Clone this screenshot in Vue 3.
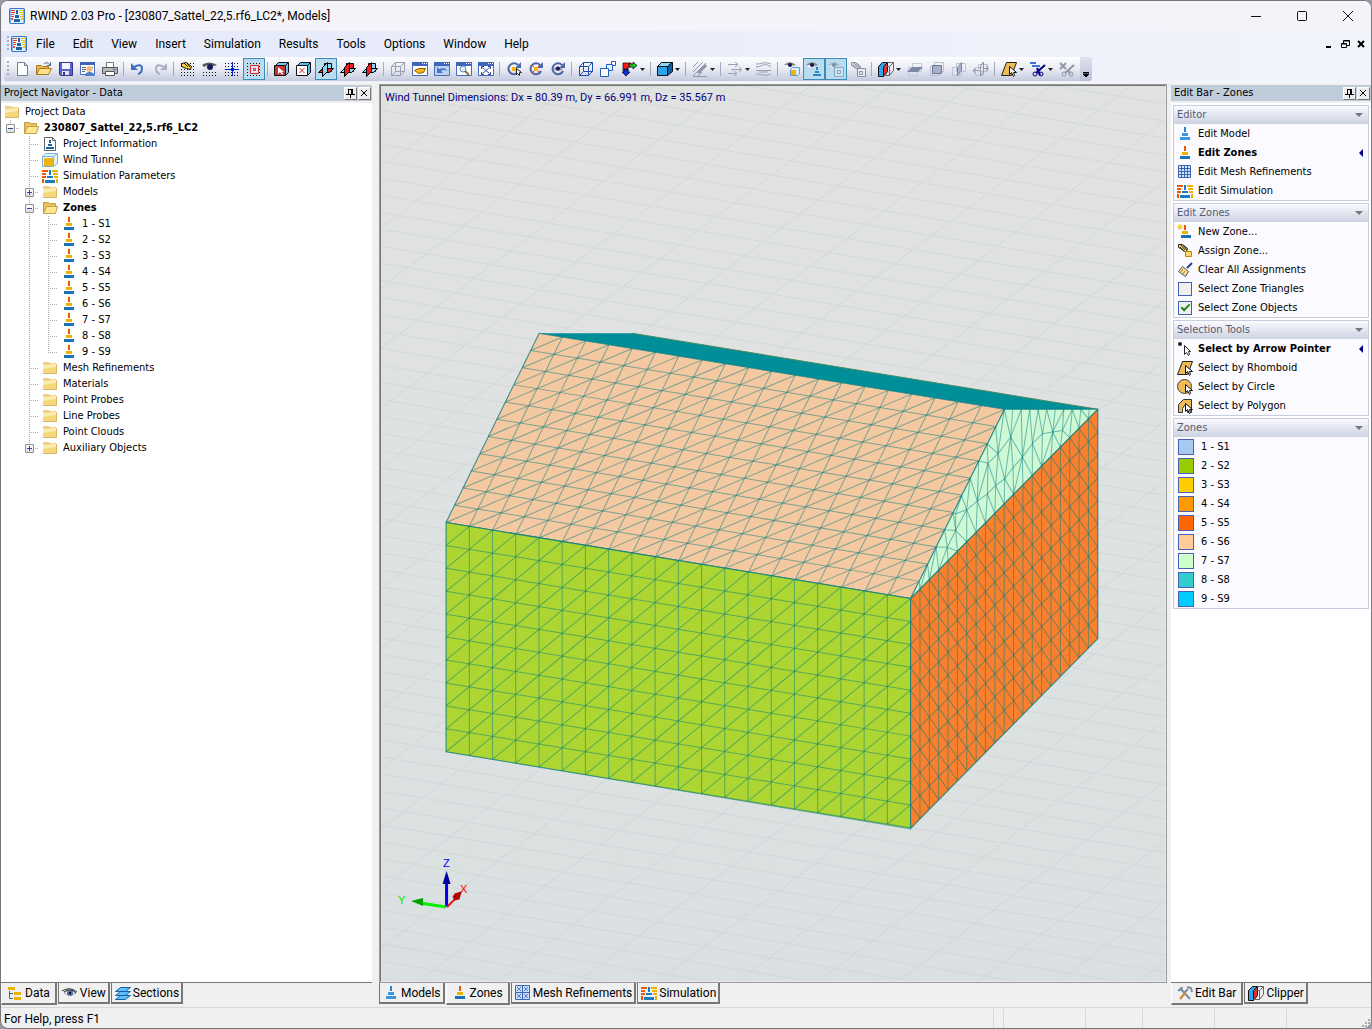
<script setup>
import { ref } from 'vue'

const navy = '#000080'
const tower = (a, b, c) =>
  `<path fill="${a}" d="M7 1h2v5H7z"/><path fill="${b}" d="M5 7h6v3H5z"/><path fill="${c}" d="M3 11h10v3H3z"/>`
const dots =
  '<path stroke="#111" stroke-width="1" stroke-dasharray="1 2" d="M1 2.5h14M1 5.5h14M1 8.5h14M1 11.5h14M1 14.5h14"/>'
const frame =
  '<path fill="#fff" stroke="#4a6cb8" d="M.5 1.5h15v13H.5z"/><path fill="#3f66ba" d="M0 1h16v4H0z"/><path fill="#fff" d="M10 2h1v1h-1zM12 2h1v1h-1zM14 2h1v1h-1z"/>'
const wire = (c) =>
  `<path fill="none" stroke="${c}" d="M1.5 5.5h9v9h-9zM5.5 1.5h9v9h-9zM1.5 5.5l4-4M10.5 5.5l4-4M10.5 14.5l4-4M1.5 14.5l4-4"/>`
const planes = (a, b, c) =>
  `<path fill="${a}" stroke="#000" d="M6.500 2.500h7v8h-7z"/><path fill="${b}" stroke="#000" d="M.5 11.500l4-4h11l-4 4z"/><path fill="${c}" stroke="#000" d="M4.500 6.500l5-5v9l-5 5z"/>`
const rot =
  '<path fill="none" stroke="#4a67a8" stroke-width="2" d="M12 4A5.500 5.500 0 1 0 13 10"/><path fill="#4a67a8" d="M15 1v6H9z"/>'
const eye =
  '<path fill="#888" d="M0 4q4-4 9-2l3 2-4 1z"/><path fill="#fff" d="M1 5q4-2 8 0-4 3-8 0z"/><circle cx="6" cy="4" r="2" fill="#11154c"/>'
const arrow = '<path fill="#fff" stroke="#111" d="M8.500 5.500v8l2-2 2 4 1-1-1-3h3z"/>'
const hand = (c, f) => `<path fill="${f}" stroke="${c}" d="M1.500 1.500l4 0 5 4-1 3-2 0-4-3-2-1z"/><path stroke="${c}" d="M4 2l4 5M6 2l4 5M3 4l4 4"/>`
const gridBars =
  '<path fill="#e8590c" d="M0 2h6v2H0zM0 5h4v2H0zM0 8h4v2H0zM0 11h2v4H0z"/><path fill="#edb200" d="M10 2h6v2h-6zM11 5h5v2h-5zM12 8h4v2h-4zM14 11h2v4h-2z"/><path fill="#1a7cc4" d="M7 2h2v5H7zM5 8h6v2H5zM3 12h10v3H3z"/>'

const icons = {
  app: '<rect width="16" height="16" rx="2" fill="#2f77cc"/><rect x="1.500" y="1" width="13" height="14" fill="#e7f3ff"/><path fill="#ef3e20" d="M2 2h4v1H2zM2 4h4v1H2zM2 6h3v1H2zM2 8h3v1H2zM2 10h2v2H2z"/><path fill="#f4c000" d="M10 2h4v1h-4zM10 4h4v1h-4zM11 6h3v1h-3zM11 8h3v1h-3zM12 10h2v2h-2z"/><path fill="#1c64a8" d="M7 2h2v4H7zM6 7h4v3H6zM5 11h6v3H5z"/>',
  new: '<path fill="#fff" stroke="#6d7f99" d="M3.500 1.500h7l3 3v10h-10z"/><path fill="#cdd9ea" stroke="#6d7f99" d="M10.500 1.500v3h3"/>',
  open: '<path fill="#e8b84c" stroke="#a87a20" d="M.5 4.500h5l1 1h6v8h-12z"/><path fill="#ffe08a" stroke="#a87a20" d="M.5 13.500l3-6h12l-3 6z"/><path fill="none" stroke="#4a6a8c" d="M8 3q3-3 6 1M14.500 1v3.500H11"/>',
  save: '<path fill="#5b62cc" stroke="#33388f" d="M1.500 1.500h13v13h-12l-1-1z"/><path fill="#f3f5ff" d="M4 2h8v6H4z"/><path fill="#dfe2f0" d="M4 10h7v4H4z"/><path fill="#33388f" d="M5 11h2v3H5z"/>',
  props: '<path fill="#fff" stroke="#4a6cb8" d="M.5 1.500h14v12H.5z"/><path fill="#3f66ba" d="M0 1h15v3H0z"/><path stroke="#55657f" d="M2 6.500h4M2 8.500h4M2 10.500h3M9 6.500h4"/><circle cx="9.500" cy="8" r="3" fill="#f5b77a"/><path fill="#4c80cc" d="M5 15q0-4 4.500-4t5.500 4z"/>',
  print: '<path fill="#fff" stroke="#777" d="M4.500 1.500h7v5h-7z"/><path fill="#b4b8bf" stroke="#555" d="M.5 6.500h15v6H.5z"/><path fill="#fff" stroke="#555" d="M3.500 10.500h9v4h-9z"/><path fill="#4a6fb8" d="M11 8h3v1h-3z"/>',
  undo: '<path fill="none" stroke="#3f6ec2" stroke-width="2" d="M4 6q7-4 8 1 0 5-4 6"/><path fill="#3f6ec2" d="M1 2v7h7z"/>',
  redo: '<path fill="none" stroke="#a9b0c2" stroke-width="2" d="M12 6q-7-4-8 1 0 5 4 6"/><path fill="#a9b0c2" d="M15 2v7H8z"/>',
  dotHand: dots + '<path fill="#ffd23c" stroke="#111" d="M1.500 2.500l5-1 5 4-1 3-4-1-5-2z"/><path stroke="#111" d="M4 2l4 4M7 2l3 4"/>',
  dotEye: dots + '<path fill="#e6e6e6" d="M1 2h13v7H1z"/><path fill="#555" d="M0 4q7-5 15 0l-3 1Q7 2 2 6z"/><circle cx="8" cy="6" r="3" fill="#16195c"/>',
  dotCross: dots + '<path stroke="#0020d0" d="M8.500 1v14M1 8.500h14"/><path fill="#0020d0" d="M7 7h3v3H7z"/>',
  dotBox: dots + '<path fill="#d7ecf8" stroke="#ee2020" d="M4.500 4.500h8v8h-8zM7.500 7.500h2v2h-2z"/>',
  boxRed: '<path fill="#7cc4f0" stroke="#111" d="M1.500 4.500l3-3h10v10l-3 3"/><path fill="#c43838" stroke="#111" d="M.5 4.500h11v10H.5z"/><path fill="#fff" d="M4 6v7l2-2 2 3 1-1-1-2h2z"/><path stroke="#111" d="M11.500 4.500l3-3"/>',
  boxX: '<path fill="#5cbcf0" stroke="#111" d="M1.500 4.500l3-3h10v10l-3 3"/><path fill="#fff" stroke="#111" d="M.5 4.500h11v10H.5z"/><path stroke="#e02020" d="M3.500 7l5 5M8.500 7l-5 5"/><path stroke="#111" d="M11.500 4.500l3-3"/>',
  pl1: planes('#8ed2f2', '#ee2020', '#8ed2f2'),
  pl2: planes('#ee2020', '#8ed2f2', '#ee2020'),
  pl3: planes('#8ed2f2', '#8ed2f2', '#ee2020'),
  wireGray: wire('#9aa0b2'),
  winHand: frame + '<path fill="#f6b91c" stroke="#8b5a00" d="M2.500 9.500l4-2 7 0-2 4-5 1z"/>',
  winBack: frame + '<path fill="#bcd3f2" d="M1 5h14v9H1z"/><path fill="#4776c8" d="M3 6v6h6L7 10q3-2 6 0-1-4-8-2z"/>',
  winZoom: frame + '<circle cx="7" cy="8" r="3" fill="#d5ecff" stroke="#6d86a8"/><path stroke="#8a6b40" stroke-width="2" d="M9 10l4 4"/>',
  winFit: frame + '<path stroke="#2a4a9a" fill="none" d="M4.500 6.500l7 6M11.500 6.500l-7 6M3.500 8V5.500H6M10 5.500h2.500V8M3.500 11v2.500H6M10 13.500h2.500V11"/>',
  rotP: rot + '<path fill="#f8b400" d="M6 6h4v4H6z"/><path fill="#fff" stroke="#222" d="M10.500 7.500v6l1-1 2 2 0-3 2 0z"/>',
  rotX: rot + '<path fill="#f8b400" d="M6 6h4v4H6z"/><path stroke="#ee3030" d="M4 4l2 2M12 12l-2-2M12 4l-2 2M4 12l2-2"/>',
  rotE: rot + '<path fill="#999" d="M3 8q4-5 10 0-5 4-10 0z"/><circle cx="8" cy="7.500" r="2" fill="#16195c"/>',
  wireBlue: wire('#1f4fae'),
  boxes: '<path fill="#fff" stroke="#1f5fc4" d="M11.500 .5h4v4h-4z"/><path fill="#e4f1ff" stroke="#1f5fc4" d="M6.500 3.500h6v6h-6z"/><path fill="#fff" stroke="#1f5fc4" d="M.5 7.500h8v8h-8z"/>',
  axes: '<path fill="#ff1818" stroke="#000" stroke-width=".7" d="M1 2h8v4H6v4H1z"/><path fill="#10c820" stroke="#000" stroke-width=".7" d="M7 3h4V1l4 3.500-4 3.500V6H7z"/><path fill="#1030e0" stroke="#000" stroke-width=".7" d="M2 8h4v3h2l-4 4-4-4h2z"/>',
  cube: '<path fill="#2fa4ea" stroke="#111" d="M.5 5.500h10v9H.5z"/><path fill="#8cd8fa" stroke="#111" d="M.5 5.500l4-4h11l-5 4z"/><path fill="#10609c" stroke="#111" d="M10.500 5.500l5-4v9l-5 4z"/>',
  hatch: '<path stroke="#8f96a8" d="M1 6l5-5M1 11L11 1M1 15L14 2M6 15l4-4"/><path stroke="#8f96a8" stroke-width="3" d="M6 12l8-8"/><path stroke="#8f96a8" d="M1 15.500h14"/>',
  flow: '<path fill="none" stroke="#9aa1b4" d="M1 3.500h9M4 8.500h10M1 12.500h8M8 1l3 2.500L8 6M12 6l3 2.500L12 11M7 10l3 2.500L7 15"/>',
  waves: '<path fill="none" stroke="#9aa1b4" d="M0 3q4 0 7-1t8 1M0 6q4 0 7-2t8 2M0 9.500h15M0 13q4 0 7 1t8-1M3 11h9"/>',
  eyeCube: eye + '<path fill="#d8efff" stroke="#5c9ed0" d="M6.500 8.500l2-2h7v6l-2 2h-7z"/><path fill="#f8b000" d="M7 9h5v5H7z"/>',
  eyeTower: eye + '<path fill="#2b82c8" d="M10 6h2v3h-2zM9 10h4v2H9zM7 13h8v2H7z"/>',
  eyeBox: '<g opacity=".4">' + eye + '<path fill="#dceaf2" stroke="#557" d="M6.500 6.500h9v9h-9zM9.500 9.500h3v3h-3z"/></g>',
  handBox: hand('#8a90a2', '#d7dae4') + '<path fill="#e9ebf3" stroke="#8a90a2" d="M7.500 7.500h8v8h-8zM9.500 10.500h3v3h-3z"/>',
  clip: '<path fill="#2fa4ea" stroke="#111" d="M.5 5.500l4-4h5l-4 4v10h-5z"/><path fill="#ee2828" stroke="#111" d="M5.500 5.500l4-4v9l-4 5z"/><path fill="none" stroke="#666" d="M9.500 1.500h6v8l-4 5h-6M11.500 5.500v9M5.500 5.500h6l4-4"/>',
  secA: '<path fill="none" stroke="#c3c8d6" d="M1.500 6.500h9v8h-9zM5.500 2.500h9v8h-9z"/><path fill="#7d87a4" d="M0 11l5-5h11l-5 5z"/>',
  secB: '<path fill="none" stroke="#b8bece" d="M1.500 5.500h9v9h-9zM5.500 1.500h9v9h-9z"/><path fill="#a8b1cc" stroke="#6d7694" d="M3.500 4.500h9v8h-9z"/>',
  secC: '<path fill="none" stroke="#bcc1d0" d="M1.500 6.500h9v8h-9zM5.500 2.500h9v8h-9z"/><path fill="#a8b1cc" stroke="#7d87a4" d="M6.500 6.500l4-5v8l-4 5z"/>',
  secD: '<path fill="none" stroke="#bcc1d0" d="M2.500 6.500h8v8h-8zM5.500 3.500h9v7h-9z"/><path fill="none" stroke="#8d95aa" d="M7.500 5l3-4v10l-3 4zM0 9.500h5M11 7.500h5M2 7L0 9.500 2 12M13 5l2 2.500L13 10"/>',
  rhomb: '<path fill="#eebb55" stroke="#222" d="M.5 14.500l5-13h10l-5 13z"/>' + arrow,
  cut: `<path fill="#3a78d8" d="M0 1h6v2H0zM2 4h8v2H2z"/><path stroke="${navy}" stroke-width="2" d="M15 4L6 12M7 7l3 7"/><circle cx="5" cy="13" r="2" fill="none" stroke="${navy}"/><circle cx="11" cy="13" r="2" fill="none" stroke="${navy}"/>`,
  cutX: '<path stroke="#9197a9" stroke-width="2" d="M1 2l6 6M7 2L1 8M15 4L6 12M9 8l2 5"/><circle cx="5" cy="13" r="2" fill="none" stroke="#9197a9"/><circle cx="12" cy="13" r="2" fill="none" stroke="#9197a9"/>',
  folder: '<path fill="#ead08a" d="M1 2h6l1 1h5v2H1z"/><path fill="#f4d67c" d="M1 4h7l2-1h4v11H1z"/><path fill="#fbeab2" d="M1 5h7l2-1h4v3L1 9z"/><path fill="none" stroke="#d9b560" d="M1 13.500h13.500V4"/>',
  folderOpen: '<path fill="#e9c264" stroke="#c39a3c" d="M1.500 13.500v-11h5l1 1h6v3"/><path fill="#ffe694" stroke="#c8a042" d="M1.500 13.500l3-7h11l-2 7z"/>',
  info: '<path fill="#fff" stroke="#666" d="M2.500 1.500h8l3 3v10h-11z"/><path fill="none" stroke="#666" d="M10.500 1.500v3h3"/><path fill="#1d5f96" d="M7 4h2v3H7zM6 8h4v2H6zM4 11h8v2H4z"/>',
  tunnel: '<path fill="#e1f3ff" stroke="#7ab4d6" d="M.5 4.500l3-3h12v10l-4 3H.5z"/><path fill="#efb410" d="M2 6h9v8H2z"/><path fill="none" stroke="#7ab4d6" d="M11.500 4.500v10M.5 4.500h11l4-3"/>',
  bars: gridBars,
  zone: tower('#e8590c', '#edb200', '#1a72b8'),
  model: tower('#2586d0', '#3c98dc', '#3c98dc'),
  mesh: '<path fill="#d5e9fb" stroke="#3c62b4" d="M1.500 1.500h12v12h-12zM4.500 1v13M7.500 1v13M10.500 1v13M1 4.500h13M1 7.500h13M1 10.500h13"/>',
  meshTab: '<path fill="#c7e0f6" stroke="#3c66bc" d="M.5 .5h14v14H.5zM7.500 0v15M0 7.500h15"/><path fill="none" stroke="#3c66bc" stroke-width=".8" d="M2 2l4 4M6 2L2 6M9 2l4 4M13 2L9 6M2 9l4 4M6 9l-4 4M9 9l4 4M13 9l-4 4"/>',
  newZone: '<path fill="#e8590c" d="M7 1h2v5H7z"/><path fill="#edb200" d="M5 7h6v3H5z"/><path fill="#1a72b8" d="M4 11h10v3H4z"/><path stroke="#f7c518" d="M3 0v6M0 3h6M1 1l4 4M5 1L1 5"/>',
  assign: hand('#222', '#ffd76a') + '<path fill="#ffd76a" stroke="#c48a00" d="M8.500 8.500h6v5h-6z"/>',
  clear: '<path stroke="#2a3f82" stroke-width="2" d="M15 1l-5 5"/><path fill="#ffdf86" stroke="#3c4f8c" d="M5.500 4.500l6 5-3 5-7-5z"/><path stroke="#9b7d30" d="M6 7l-2 3M8 9l-2 3"/>',
  pointer: '<circle cx="3" cy="3" r="2" fill="#222"/><path fill="#fff" stroke="#222" d="M7.500 4.500v9l2-2 2 3 1-1-1-3h2z"/>',
  circle: '<circle cx="7.500" cy="7.500" r="7" fill="#eebb55" stroke="#444"/>' + arrow,
  polygon: '<path fill="#eebb55" stroke="#333" d="M1.500 14.500v-8l5-5h8v13h-4v-5l-3-2-2 3v4z"/>' + arrow,
  tree: '<path fill="#edb200" d="M1 2h7v3H1zM7 7h7v3H7zM7 12h7v3H7z"/><path fill="none" stroke="#2b62a8" d="M2.500 6v7.500H6M2.500 8.500H6"/>',
  eye: '<path fill="#fff" stroke="#aaa" d="M2 8q6-5 12 0-6 4-12 0z"/><circle cx="8" cy="8" r="3" fill="#4a6ca8"/><circle cx="8" cy="8" r="1" fill="#000"/><path fill="none" stroke="#333" d="M0 6q8-5 15 1M2 7q6-5 12 1"/>',
  layers: '<path fill="#5cc0f6" stroke="#1560a8" d="M.5 14.500l5-4h10l-5 4zM.5 10.500l5-4h10l-5 4zM.5 6.500l5-4h10l-5 4z"/>',
  tools: '<path stroke="#7a8ca4" stroke-width="2" d="M3 3l10 11M11 4L8 7"/><path stroke="#c88a30" stroke-width="2" d="M8 8l-5 6"/><path fill="none" stroke="#7a8ca4" stroke-width="2" d="M1 5q3 1 4-3M10 2l4 1 1 4"/>',
}

const menus = ['File', 'Edit', 'View', 'Insert', 'Simulation', 'Results', 'Tools', 'Options', 'Window', 'Help']

const toolbar =
  'new open save props print | undo redo | dotHand dotEye dotCross dotBox! | boxRed boxX pl1! pl2 pl3 | wireGray winHand winBack winZoom winFit | rotP rotX rotE | wireBlue boxes axes> | cube> | hatch> | flow> waves | eyeCube eyeTower! eyeBox! handBox | clip> secA secB secC secD | rhomb> cut> cutX'
    .split(' ')
    .map((t) => ({ name: t.replace(/[!>]/g, ''), on: t.endsWith('!'), drop: t.endsWith('>'), sep: t === '|' }))

const tree = [
  { cells: [], icon: 'folder', text: 'Project Data' },
  { cells: ['l'], box: '−', icon: 'folderOpen', text: '230807_Sattel_22,5.rf6_LC2', bold: true },
  { cells: ['', 't'], icon: 'info', text: 'Project Information' },
  { cells: ['', 't'], icon: 'tunnel', text: 'Wind Tunnel' },
  { cells: ['', 't'], icon: 'bars', text: 'Simulation Parameters' },
  { cells: ['', 't'], box: '+', icon: 'folder', text: 'Models' },
  { cells: ['', 't'], box: '−', icon: 'folderOpen', text: 'Zones', bold: true },
  ...Array.from({ length: 9 }, (_, i) => ({
    cells: ['', 't v', i === 8 ? 'l' : 't'],
    icon: 'zone',
    text: `${i + 1} - S${i + 1}`,
  })),
  { cells: ['', 't'], icon: 'folder', text: 'Mesh Refinements' },
  { cells: ['', 't'], icon: 'folder', text: 'Materials' },
  { cells: ['', 't'], icon: 'folder', text: 'Point Probes' },
  { cells: ['', 't'], icon: 'folder', text: 'Line Probes' },
  { cells: ['', 't'], icon: 'folder', text: 'Point Clouds' },
  { cells: ['', 'l'], box: '+', icon: 'folder', text: 'Auxiliary Objects' },
]

const zoneObjects = ref(true)
const zoneTriangles = ref(false)

const zoneColors = ['#a6caf0', '#99cc00', '#ffcc00', '#ff9900', '#ff6600', '#ffcc99', '#ccffcc', '#33cccc', '#00ccff']

const editor = [
  { icon: 'model', text: 'Edit Model' },
  { icon: 'zone', text: 'Edit Zones', on: true },
  { icon: 'mesh', text: 'Edit Mesh Refinements' },
  { icon: 'bars', text: 'Edit Simulation' },
]
const zoneTools = [
  { icon: 'newZone', text: 'New Zone...' },
  { icon: 'assign', text: 'Assign Zone...' },
  { icon: 'clear', text: 'Clear All Assignments' },
]
const selection = [
  { icon: 'pointer', text: 'Select by Arrow Pointer', on: true },
  { icon: 'rhomb', text: 'Select by Rhomboid' },
  { icon: 'circle', text: 'Select by Circle' },
  { icon: 'polygon', text: 'Select by Polygon' },
]

// Wire mesh of a parallelogram face: origin, column vector, row vector
function meshLines(o, a, b, cols, rows, flip) {
  const at = (i, j) => [o[0] + (a[0] * i) / cols + (b[0] * j) / rows, o[1] + (a[1] * i) / cols + (b[1] * j) / rows]
  const out = []
  const push = (p, q) => out.push({ x1: p[0], y1: p[1], x2: q[0], y2: q[1] })
  for (let i = 0; i <= cols; i++) push(at(i, 0), at(i, rows))
  for (let j = 0; j <= rows; j++) push(at(0, j), at(cols, j))
  for (let k = 1; k < cols + rows; k++) {
    const i0 = Math.max(0, k - rows)
    const i1 = Math.min(cols, k)
    if (flip) push(at(i0, rows - (k - i0)), at(i1, rows - (k - i1)))
    else push(at(i0, k - i0), at(i1, k - i1))
  }
  return out
}
const front = meshLines([446, 522], [464, 76], [0, 229], 20, 10, false)
const side = meshLines([910, 598], [187, -189], [0, 229], 20, 10, true)
const roof = meshLines([539, 333], [465, 76], [-93, 189], 20, 11, false)

// Free triangulation of the gable in its own plane (u along the eaves, v upwards)
const H = 4.14
const pts = []
for (let i = 0; i <= 20; i++) pts.push([i, 0])
for (let i = 1; i <= 11; i++) pts.push([(10 * i) / 11, (H * i) / 11])
for (let i = 1; i < 11; i++) pts.push([20 - (10 * i) / 11, (H * i) / 11])
for (const [x, y] of [[352, 220], [322, 248], [390, 170], [425, 230], [397, 262], [372, 295], [345, 315], [320, 340], [290, 362], [258, 388], [225, 400], [225, 450], [200, 500], [485, 160], [455, 190], [516, 155], [545, 150]]) {
  const u = (880 + x / 3 - 910) / 9.35
  pts.push([u, (598 - 9.45 * u - 380 - y / 3) / 22.8])
}
const toScreen = ([u, v]) => [910 + 9.35 * u, 598 - 9.45 * u - 22.8 * v]
function delaunay(p) {
  const edges = new Map()
  for (let i = 0; i < p.length; i++)
    for (let j = i + 1; j < p.length; j++)
      for (let k = j + 1; k < p.length; k++) {
        const [ax, ay] = p[i], [bx, by] = p[j], [cx, cy] = p[k]
        const d = 2 * (ax * (by - cy) + bx * (cy - ay) + cx * (ay - by))
        if (Math.abs(d) < 0.01) continue
        const a2 = ax * ax + ay * ay, b2 = bx * bx + by * by, c2 = cx * cx + cy * cy
        const ux = (a2 * (by - cy) + b2 * (cy - ay) + c2 * (ay - by)) / d
        const uy = (a2 * (cx - bx) + b2 * (ax - cx) + c2 * (bx - ax)) / d
        const r = Math.hypot(ax - ux, ay - uy) - 0.0001
        if (p.some(([x, y]) => Math.hypot(x - ux, y - uy) < r)) continue
        for (const [m, n] of [[i, j], [j, k], [i, k]]) edges.set(m + '-' + n, [p[m], p[n]])
      }
  return [...edges.values()]
}
const gable = delaunay(pts).map(([a, b]) => {
  const p = toScreen(a), q = toScreen(b)
  return { x1: p[0], y1: p[1], x2: q[0], y2: q[1] }
})

const faces = [
  { fill: '#f4c9a1', points: '539,333 1004,409 910,598 446,522', lines: roof },
  { fill: '#cff8d4', points: '910,598 1004,409 1097,409', lines: gable },
  { fill: '#aed632', points: '446,522 910,598 910,828 446,751', lines: front },
  { fill: '#fa802d', points: '910,598 1097,409 1097,638 910,828', lines: side },
]

// Ground grid: two families of lines seen in perspective
const ground = []
for (let i = 0; i < 62; i++) {
  const y = -60 + i * 17
  ground.push({ x1: 380, y1: y, x2: 1164, y2: y + 130 })
}
for (let i = 0; i < 27; i++) {
  const x = 330 + i * 80
  ground.push({ x1: x, y1: 86, x2: x - 1200, y2: 986 })
}

const leftTabs = [{ icon: 'tree', text: 'Data', on: true }, { icon: 'eye', text: 'View' }, { icon: 'layers', text: 'Sections' }]
const midTabs = [
  { icon: 'model', text: 'Models' },
  { icon: 'zone', text: 'Zones', on: true },
  { icon: 'meshTab', text: 'Mesh Refinements' },
  { icon: 'bars', text: 'Simulation' },
]
const rightTabs = [{ icon: 'tools', text: 'Edit Bar', on: true }, { icon: 'clip', text: 'Clipper' }]
</script>

<template>
  <div class="window">
    <header class="titlebar">
      <svg class="icon" viewBox="0 0 16 16" v-html="icons.app" />
      <h1>RWIND 2.03 Pro - [230807_Sattel_22,5.rf6_LC2*, Models]</h1>
      <button class="sys" aria-label="Minimize"><svg viewBox="0 0 11 11"><path d="M0 5.500h10" /></svg></button>
      <button class="sys" aria-label="Maximize"><svg viewBox="0 0 11 11"><rect x=".5" y=".5" width="9" height="9" rx="1" /></svg></button>
      <button class="sys" aria-label="Close"><svg viewBox="0 0 11 11"><path d="M0 0l10 10M10 0L0 10" /></svg></button>
    </header>

    <nav class="menubar">
      <span class="grip" />
      <svg class="icon" viewBox="0 0 16 16" v-html="icons.app" />
      <button v-for="m in menus" :key="m" class="menu">{{ m }}</button>
      <span class="mdi">
        <button aria-label="Minimize document"><svg viewBox="0 0 9 9"><path d="M1 7h5" stroke-width="2" /></svg></button>
        <button aria-label="Restore document"><svg viewBox="0 0 9 9"><path d="M2.500 3V.5h6v5H6M.5 3.500h5v4h-5zM.5 4h5M2.500 1h6" /></svg></button>
        <button aria-label="Close document"><svg viewBox="0 0 9 9"><path d="M1 1l6 6M7 1L1 7" stroke-width="2" /></svg></button>
      </span>
    </nav>

    <div class="toolrow">
      <div class="toolbar">
        <span class="grip" />
        <template v-for="(t, i) in toolbar" :key="i">
          <span v-if="t.sep" class="sep" />
          <button v-else class="tool" :class="{ on: t.on, drop: t.drop }" :aria-label="t.name">
            <svg class="icon" viewBox="0 0 16 16" v-html="icons[t.name]" />
            <svg v-if="t.drop" class="caret" viewBox="0 0 5 3"><path d="M0 0h5L2.500 3z" /></svg>
          </button>
        </template>
      </div>
      <button class="more" aria-label="Toolbar options"><svg viewBox="0 0 6 6"><path d="M0 .5h6M0 2h6L3 5z" /></svg></button>
    </div>

    <main class="work">
      <aside class="left">
        <div class="pane-title">
          <h2>Project Navigator - Data</h2>
          <button aria-label="Pin"><svg viewBox="0 0 9 9"><path d="M2.500 0v5M5.500 0v5M6.500 0v5M0 5.500h9M4.500 6v3M2 .5h5" /></svg></button>
          <button aria-label="Close pane"><svg viewBox="0 0 9 9"><path d="M1 1l6 6M7 1L1 7" /></svg></button>
        </div>
        <ul class="tree">
          <li v-for="(r, i) in tree" :key="i" :class="{ bold: r.bold }">
            <span v-for="(c, n) in r.cells" :key="n" class="cell" :class="c">
              <button v-if="r.box && n === r.cells.length - 1" class="box" aria-label="Toggle">
                <svg viewBox="0 0 9 9"><path :d="r.box === '+' ? 'M2 4.500h5M4.500 2v5' : 'M2 4.500h5'" /></svg>
              </button>
            </span>
            <svg class="icon" viewBox="0 0 16 16" v-html="icons[r.icon]" />
            <span class="label">{{ r.text }}</span>
          </li>
        </ul>
        <div class="tabs">
          <button v-for="t in leftTabs" :key="t.text" :class="{ on: t.on }"><svg class="icon" viewBox="0 0 16 16" v-html="icons[t.icon]" />{{ t.text }}</button>
        </div>
      </aside>

      <section class="center">
        <div class="view">
          <p class="dims">Wind Tunnel Dimensions: Dx = 80.39 m, Dy = 66.991 m, Dz = 35.567 m</p>
          <svg class="scene" viewBox="381 86 784 894" preserveAspectRatio="xMinYMin slice">
            <defs>
              <linearGradient id="sky" x1="0" y1="0" x2="0" y2="1">
                <stop offset="0" stop-color="#e2e3e2" />
                <stop offset="1" stop-color="#dae0e1" />
              </linearGradient>
            </defs>
            <rect x="380" y="85" width="786" height="896" fill="url(#sky)" />
            <g class="ground"><line v-for="(l, i) in ground" :key="i" v-bind="l" /></g>
            <polygon points="539,333 632,333 1097,409 1004,409" fill="#008e99" />
            <path class="ridge" d="M632 333L1097 409" />
            <g v-for="(f, i) in faces" :key="i" class="face">
              <polygon :points="f.points" :fill="f.fill" />
              <line v-for="(l, n) in f.lines" :key="n" v-bind="l" />
            </g>
            <g class="axes">
              <path d="M446.500 906V880" stroke="#0000e6" stroke-width="3" />
              <path d="M446.500 870l4 13h-8z" fill="#0000a0" />
              <path d="M446 906l-26-4" stroke="#00f000" stroke-width="3" />
              <path d="M411 900l12-3v8z" fill="#00a000" />
              <path d="M447 906l9-9" stroke="#f01010" stroke-width="2" />
              <path d="M461 891l-2 7-4 1-2-3 2-3z" fill="#b00000" stroke="#b00000" />
              <text x="443" y="866" fill="#0000ff">Z</text>
              <text x="398" y="903" fill="#00e800">Y</text>
              <text x="460" y="892" fill="#ff0000">X</text>
            </g>
          </svg>
        </div>
        <div class="tabs">
          <button v-for="t in midTabs" :key="t.text" :class="{ on: t.on }"><svg class="icon" viewBox="0 0 16 16" v-html="icons[t.icon]" />{{ t.text }}</button>
        </div>
      </section>

      <aside class="right">
        <div class="pane-title">
          <h2>Edit Bar - Zones</h2>
          <button aria-label="Pin"><svg viewBox="0 0 9 9"><path d="M2.500 0v5M5.500 0v5M6.500 0v5M0 5.500h9M4.500 6v3M2 .5h5" /></svg></button>
          <button aria-label="Close pane"><svg viewBox="0 0 9 9"><path d="M1 1l6 6M7 1L1 7" /></svg></button>
        </div>
        <div class="panels">
          <section class="panel">
            <h3>Editor<i /></h3>
            <button v-for="e in editor" :key="e.text" class="entry" :class="{ bold: e.on }"><svg class="icon" viewBox="0 0 16 16" v-html="icons[e.icon]" /><span>{{ e.text }}</span></button>
          </section>
          <section class="panel">
            <h3>Edit Zones<i /></h3>
            <button v-for="e in zoneTools" :key="e.text" class="entry"><svg class="icon" viewBox="0 0 16 16" v-html="icons[e.icon]" /><span>{{ e.text }}</span></button>
            <label class="entry"><input v-model="zoneTriangles" type="checkbox"><span>Select Zone Triangles</span></label>
            <label class="entry"><input v-model="zoneObjects" type="checkbox"><span>Select Zone Objects</span></label>
          </section>
          <section class="panel">
            <h3>Selection Tools<i /></h3>
            <button v-for="e in selection" :key="e.text" class="entry" :class="{ bold: e.on }"><svg class="icon" viewBox="0 0 16 16" v-html="icons[e.icon]" /><span>{{ e.text }}</span></button>
          </section>
          <section class="panel">
            <h3>Zones<i /></h3>
            <div v-for="(c, i) in zoneColors" :key="c" class="entry legend"><b :style="{ background: c }" /><span>{{ i + 1 }} - S{{ i + 1 }}</span></div>
          </section>
        </div>
        <div class="tabs">
          <button v-for="t in rightTabs" :key="t.text" :class="{ on: t.on }"><svg class="icon" viewBox="0 0 16 16" v-html="icons[t.icon]" />{{ t.text }}</button>
        </div>
      </aside>
    </main>

    <footer class="status">
      <span class="msg">For Help, press F1</span>
      <span class="s1" /><span class="s2" /><span class="s3" /><span class="s4" /><span class="s4" />
      <span class="last"><svg viewBox="0 0 9 9"><path d="M6 0h2v2H6zM3 3h2v2H3zM6 3h2v2H6zM0 6h2v2H0zM3 6h2v2H3zM6 6h2v2H6z" /></svg></span>
    </footer>
  </div>
</template>

<style>
body {
  margin: 0;
  background: #9a9aa4;
}
</style>

<style scoped>
* {
  box-sizing: border-box;
}
.window {
  display: flex;
  flex-direction: column;
  min-height: 100vh;
  border: 1px solid #76767c;
  border-radius: 8px;
  overflow: hidden;
  background: #f0f0f0;
  font: 11px/16px 'DejaVu Sans Condensed', 'Noto Sans', sans-serif;
  color: #000;
}
button {
  padding: 0;
  border: 0;
  background: none;
  font: inherit;
  color: inherit;
}
h1, h2, h3, p, ul {
  margin: 0;
  padding: 0;
  font-size: inherit;
  font-weight: normal;
}
svg {
  display: block;
}
.icon {
  flex: none;
  width: 16px;
  height: 16px;
  fill: none;
}
.titlebar {
  display: flex;
  align-items: center;
  height: 30px;
  padding-left: 8px;
  background: #f4f3f9;
  font: 12px/16px Roboto, sans-serif;
}
.titlebar h1 {
  flex: 1;
  margin-left: 5px;
}
.sys {
  display: flex;
  justify-content: center;
  width: 46px;
}
.sys svg {
  width: 11px;
  height: 11px;
  fill: none;
  stroke: #111;
}
.menubar {
  display: flex;
  align-items: center;
  height: 26px;
  padding-left: 6px;
  background: linear-gradient(90deg, #e4e9f9, #f1f3fb 90%);
  font: 12px/16px Roboto, sans-serif;
}
.grip {
  width: 2px;
  height: 16px;
  background: repeating-linear-gradient(#a9afc0 0 2px, transparent 2px 4px);
}
.menubar .icon {
  margin: 0 0 0 2px;
}
.menu {
  padding: 0 9px;
}
.mdi {
  display: flex;
  gap: 7px;
  margin-left: auto;
  padding-right: 5px;
}
.mdi svg {
  width: 9px;
  height: 9px;
  fill: none;
  stroke: #000;
}
.toolrow {
  display: flex;
  height: 25px;
  padding-left: 3px;
  background: linear-gradient(90deg, #e6eafa, #f1f3fb 90%);
}
.toolbar {
  display: flex;
  align-items: center;
  height: 24px;
  padding: 0 2px 0 3px;
  border-radius: 3px 0 0 3px;
  background: linear-gradient(#fdfdff, #eceef6 45%, #c4cade);
}
.toolbar .grip {
  margin-right: 2px;
}
.tool {
  display: flex;
  align-items: center;
  width: 22px;
  height: 22px;
  padding-left: 3px;
}
.tool.drop {
  width: 29px;
}
.tool.on {
  padding-left: 2px;
  border: 1px solid #3c8bb8;
  background: #b9dcee;
}
.caret {
  width: 5px;
  height: 3px;
  margin-left: 2px;
  fill: #222;
}
.sep {
  width: 6px;
  height: 14px;
  background: linear-gradient(90deg, transparent 2px, #a4aac0 2px 3px, transparent 3px);
}
.more {
  display: flex;
  align-items: flex-end;
  width: 12px;
  height: 24px;
  padding: 0 0 3px 3px;
  border-radius: 0 3px 3px 0;
  background: linear-gradient(#dfe2ee, #bac0d6);
}
.more svg {
  width: 6px;
  height: 6px;
  stroke: #000;
}
.work {
  display: flex;
  flex: 1;
  border-top: 1px solid #f8f8fc;
}
.left,
.right,
.center {
  display: flex;
  flex-direction: column;
}
.left,
.right {
  padding-top: 2px;
}
.left {
  width: 371px;
}
.center {
  flex: 1;
  padding-top: 1px;
  margin: 0 4px 0 7px;
}
.right {
  width: 200px;
}
.pane-title {
  display: flex;
  align-items: center;
  gap: 1px;
  height: 16px;
  padding: 0 1px 0 3px;
  background: #bfcddb;
}
.pane-title h2 {
  flex: 1;
}
.pane-title button {
  display: grid;
  place-items: center;
  width: 13px;
  height: 13px;
  border: 1px solid;
  border-color: #fff #777 #777 #fff;
  background: #ececec;
}
.pane-title svg {
  width: 9px;
  height: 9px;
  stroke: #000;
  fill: none;
}
.tree {
  flex: 1;
  padding-top: 1px;
  margin-top: 2px;
  list-style: none;
  background: #fff;
  border-bottom: 1px solid #777;
}
.tree li {
  display: flex;
  align-items: center;
  height: 16px;
}
.cell {
  display: flex;
  align-items: center;
  justify-content: center;
  width: 19px;
  height: 16px;
}
.cell.t {
  background:
    repeating-linear-gradient(#aaa 0 1px, transparent 1px 2px) 9px 0 / 1px 16px no-repeat,
    repeating-linear-gradient(90deg, #aaa 0 1px, transparent 1px 2px) 9px 8px / 10px 1px no-repeat;
}
.cell.t.v {
  background: repeating-linear-gradient(#aaa 0 1px, transparent 1px 2px) 9px 0 / 1px 16px no-repeat;
}
.cell.l {
  background:
    repeating-linear-gradient(#aaa 0 1px, transparent 1px 2px) 9px 0 / 1px 8px no-repeat,
    repeating-linear-gradient(90deg, #aaa 0 1px, transparent 1px 2px) 9px 8px / 10px 1px no-repeat;
}
.box {
  width: 9px;
  height: 9px;
  border: 1px solid #909090;
  border-radius: 1px;
  background: linear-gradient(#fff, #ddd);
}
.box svg {
  width: 9px;
  height: 9px;
  margin: -1px;
  stroke: #2a4a9c;
}
.tree .icon {
  margin: 0 5px 0 3px;
}
.bold {
  font-weight: bold;
}
.view {
  position: relative;
  flex: 1;
  border: 2px solid;
  border-color: #777 #e8e8e8 #e8e8e8 #777;
  outline: 1px solid #9a9a9a;
  outline-offset: -1px;
  overflow: hidden;
}
.scene {
  position: absolute;
  inset: 0;
  width: 100%;
  height: 100%;
}
.dims {
  position: absolute;
  z-index: 1;
  top: 4px;
  left: 4px;
  color: #000080;
  font: 11px/16px Roboto, sans-serif;
  white-space: nowrap;
}
.ground {
  stroke: #cdd3d4;
  stroke-width: 1;
  opacity: 0.6;
}
.ridge {
  stroke: #4a8a60;
}
.face {
  stroke: #007c80;
  stroke-opacity: 0.5;
}
.axes text {
  font: 11px 'Liberation Sans', sans-serif;
}
.panels {
  flex: 1;
  padding: 2px 2px 0;
  margin-top: 2px;
  background: #fff;
  border-bottom: 1px solid #777;
}
.panel {
  margin-bottom: 2px;
  border: 1px solid #c8cde0;
  background: #fafaff;
}
.panel h3 {
  display: flex;
  align-items: center;
  justify-content: space-between;
  height: 18px;
  padding: 0 5px 0 3px;
  background: linear-gradient(#fafaff, #cdd2e2);
  color: #565c70;
}
.panel h3 i {
  border: 4px solid transparent;
  border-top-color: #777;
  border-bottom: 0;
}
.entry {
  display: flex;
  align-items: center;
  gap: 5px;
  width: 100%;
  height: 19px;
  padding: 0 5px 0 3px;
  text-align: left;
}
.entry.bold::after {
  content: '';
  margin-left: auto;
  border: 4px solid transparent;
  border-right-color: #000080;
  border-left: 0;
}
.entry input {
  display: grid;
  place-items: center;
  appearance: none;
  width: 14px;
  height: 14px;
  margin: 0 1px;
  border: 1px solid #3f62b4;
  background: #f0f0ee;
}
.entry input:checked::after {
  content: '';
  width: 7px;
  height: 3px;
  margin-top: -2px;
  border: solid #1a8a2a;
  border-width: 0 0 2px 2px;
  transform: rotate(-45deg);
}
.legend {
  gap: 7px;
  padding-left: 4px;
}
.legend b {
  width: 16px;
  height: 16px;
  border: 1px solid #4561b8;
}
.tabs {
  display: flex;
  align-items: flex-start;
  height: 24px;
  gap: 1px;
  font: 12px/16px Roboto, sans-serif;
}
.tabs button {
  display: flex;
  align-items: center;
  gap: 2px;
  height: 21px;
  padding: 0 2px 0 3px;
  border: solid #777;
  border-width: 0 2px 2px 1px;
  white-space: nowrap;
}
.tabs button.on {
  height: 22px;
  padding: 0 5px;
  border-left-color: #fff;
}
.status {
  display: flex;
  align-items: center;
  height: 21px;
  border-top: 1px solid #d8d8d8;
  font: 12px/20px Roboto, sans-serif;
}
.status span {
  height: 19px;
  border-left: 1px solid #d8d8d8;
}
.status .msg {
  flex: 1;
  padding-left: 3px;
  border: 0;
}
.status .s1 { width: 10px; }
.status .s2 { width: 82px; }
.status .s3 { width: 57px; }
.status .s4 { width: 72px; }
.status .last {
  display: flex;
  align-items: flex-end;
  justify-content: flex-end;
  width: 85px;
}
.status svg {
  width: 9px;
  height: 9px;
  fill: #aaa;
}
</style>
